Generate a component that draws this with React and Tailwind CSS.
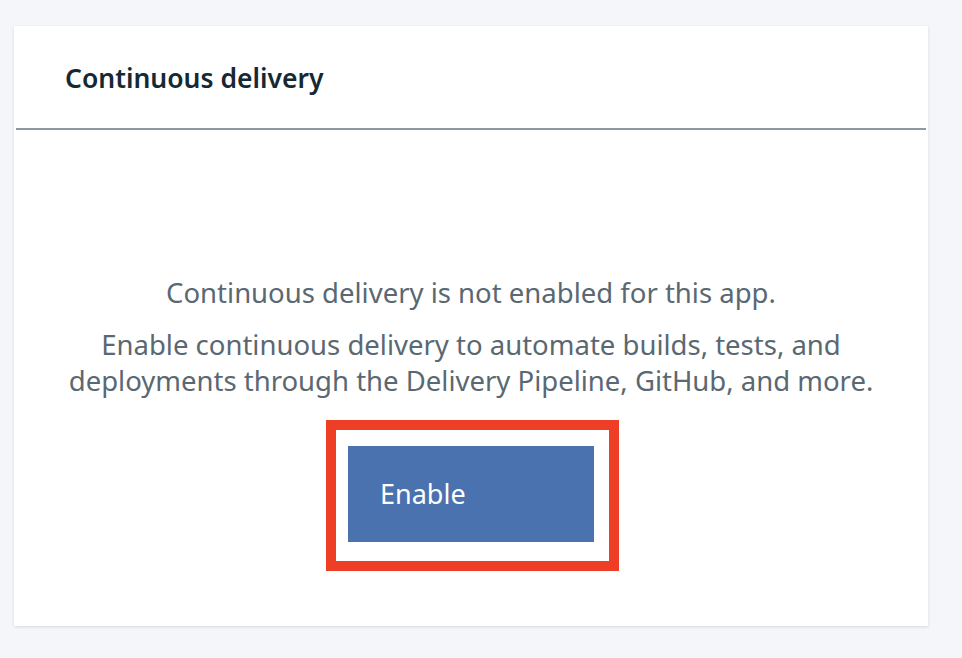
import React from 'react';

export default function App() {
  return (
    <div
      className="w-[962px] h-[658px] bg-[#f5f6fa] overflow-hidden pt-[26px] pl-[14px]"
      style={{ fontFamily: '"Noto Sans", "Open Sans", sans-serif' }}
    >
      <div className="w-[914px] h-[600px] bg-white shadow-[0_1px_3px_rgba(0,0,0,0.12)] flex flex-col">
        <div className="h-[104px] mx-[2px] border-b-2 border-[#8c98a2] flex items-center pl-[49px]">
          <h2 className="text-[26.5px] font-semibold text-[#152935] leading-[32px] pt-[2px]">
            Continuous delivery
          </h2>
        </div>
        <div className="flex flex-col items-center pt-[145px] text-center text-[#5a6872]">
          <p className="text-[27.5px] leading-[36px]">Continuous delivery is not enabled for this app.</p>
          <p className="text-[27.5px] leading-[36px] mt-[16px]">
            Enable continuous delivery to automate builds, tests, and
            <br />
            deployments through the Delivery Pipeline, GitHub, and more.
          </p>
          <div className="mt-[21px] ml-[3px] border-[10px] border-[#ee3f26] pt-[16px] pb-[19px] pl-[12px] pr-[15px]">
            <button className="block w-[246px] h-[96px] bg-[#4a72ae] text-white text-[27px] text-left pl-[32px]">
              Enable
            </button>
          </div>
        </div>
      </div>
    </div>
  );
}
